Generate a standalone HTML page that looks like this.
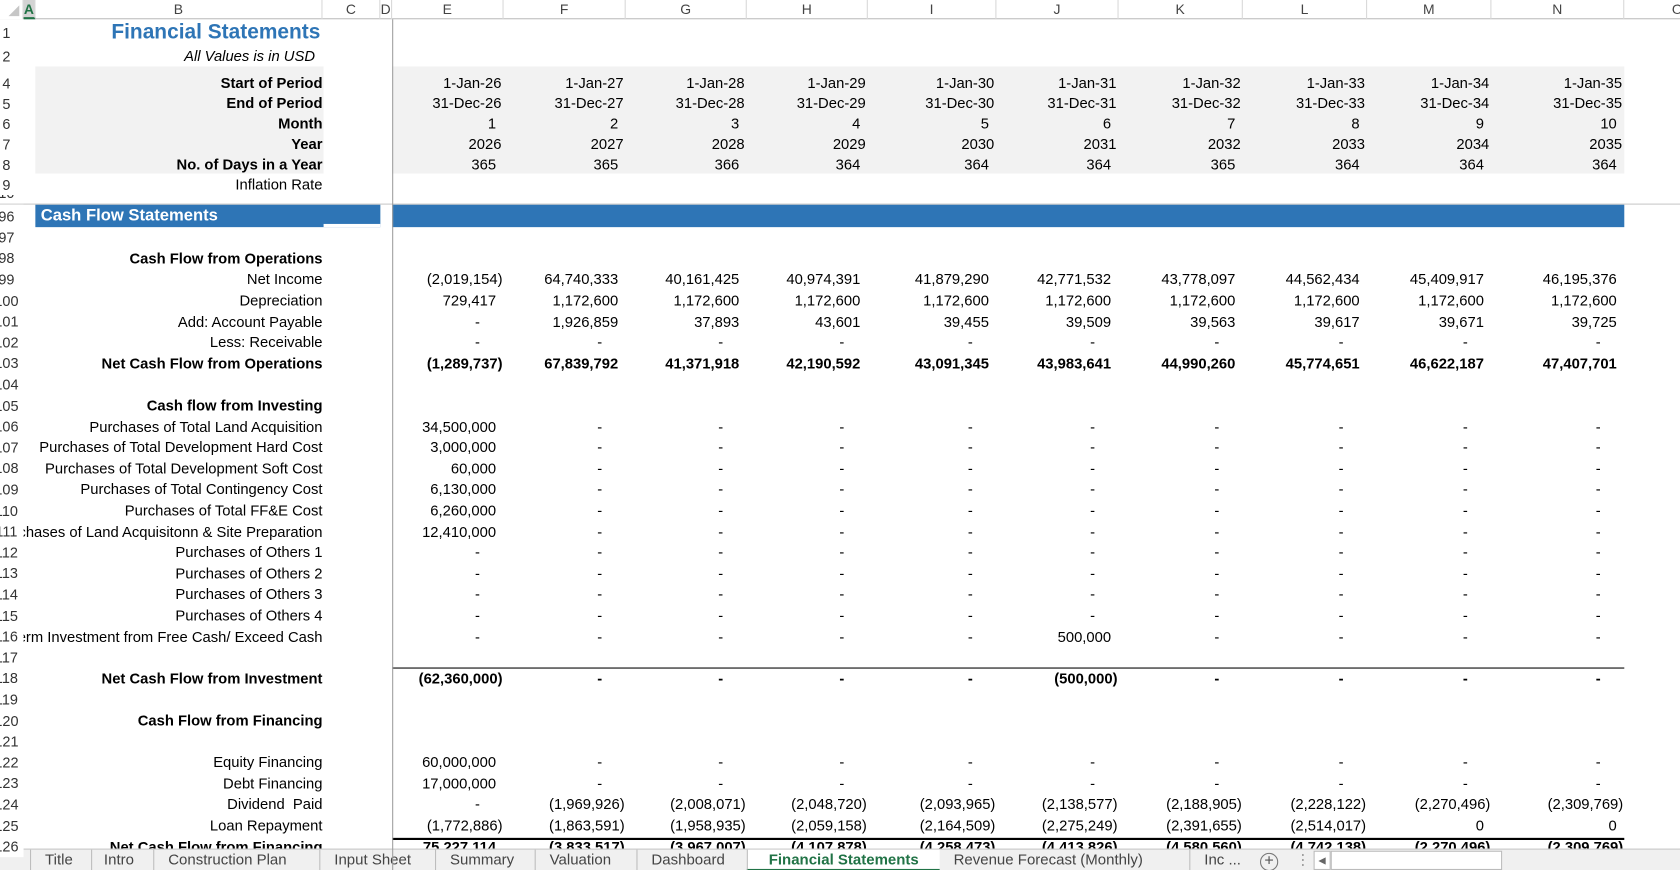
<!DOCTYPE html>
<html><head><meta charset="utf-8"><style>
*{margin:0;padding:0;box-sizing:border-box}
html,body{width:1680px;height:870px;overflow:hidden;background:#fff}
#w{position:absolute;left:0;top:0;width:1568px;height:812px;transform:scale(1.07143);transform-origin:0 0;font-family:"Liberation Sans",Arial,sans-serif;font-size:13.8px;color:#000;overflow:hidden}
.r{position:absolute;left:0;width:1568px;height:19.6px;display:flex;align-items:center;white-space:nowrap}
.n{position:absolute;left:0;top:0;width:22px;height:100%;background:#fff;z-index:2;overflow:hidden;color:#333;font-size:13.5px;font-weight:normal}
.n span{position:absolute;left:6px;top:50%;transform:translate(-50%,-50%);white-space:nowrap}
.l{margin-left:33px;width:268px;flex:none;display:flex;justify-content:flex-end;overflow:visible}
.v{flex:none;text-align:right;padding-right:7px}
.sp{width:65px;flex:none}
.v:nth-child(4){width:104px}.v:nth-child(5){width:114px}.v:nth-child(6){width:113px}.v:nth-child(7){width:113px}.v:nth-child(8){width:120px}.v:nth-child(9){width:114px}.v:nth-child(10){width:116px}.v:nth-child(11){width:116px}.v:nth-child(12){width:116px}.v:nth-child(13){width:124px}
.p{padding-right:1px}.d{padding-right:22px}.h{padding-right:2px}
.b{font-weight:bold}
.g{position:absolute;background:#f2f2f2}
#ch{position:absolute;left:0;top:0;width:1568px;height:18px;background:#fff;border-bottom:1px solid #bdbdbd;color:#444;font-size:13px}
#ch div{position:absolute;top:0;height:18px;line-height:18px;text-align:center;border-right:1px solid #d8d8d8}
#tabs{position:absolute;left:0;top:792px;width:1568px;height:20px;background:#f0f0f0;border-top:1px solid #c6c6c6;font-size:14px;color:#444}
#tabs span{position:absolute;top:0;height:20px;line-height:19px;border-left:1px solid #bdbdbd;padding:0 0}
</style></head><body><div id="w">
<div class="g" style="left:33px;top:62px;width:269px;height:100px"></div>
<div class="g" style="left:366px;top:62px;width:1150px;height:100px"></div>
<div style="position:absolute;left:33px;top:191px;width:322px;height:21px;background:#2e75b6"></div>
<div style="position:absolute;left:302px;top:209px;width:53px;height:3px;background:#fff"></div>
<div style="position:absolute;left:366px;top:191px;width:1150px;height:21px;background:#2e75b6"></div>
<div style="position:absolute;left:38px;top:191px;height:21px;line-height:21px;color:#fff;font-weight:bold;font-size:15.5px;z-index:3">Cash Flow Statements</div>
<div style="position:absolute;left:366px;top:18px;width:1px;height:800px;background:#9e9e9e;z-index:3"></div>
<div style="position:absolute;left:366px;top:623px;width:1150px;height:1px;background:#000"></div>
<div style="position:absolute;left:366px;top:782px;width:1150px;height:2px;background:#000"></div>

<div id="ch">
<div style="left:0;width:22px;background:#fff"><span style="position:absolute;left:8px;top:5px;width:0;height:0;border-left:10px solid transparent;border-bottom:10px solid #c6c6c6"></span></div>
<div style="left:22px;width:11px;background:#d3d3d3;color:#217346;font-weight:bold;border-bottom:2px solid #217346">A</div>
<div style="left:33px;width:268px">B</div>
<div style="left:301px;width:54px">C</div>
<div style="left:355px;width:11px">D</div>
<div style="left:366px;width:104px">E</div>
<div style="left:470px;width:114px">F</div>
<div style="left:584px;width:113px">G</div>
<div style="left:697px;width:113px">H</div>
<div style="left:810px;width:120px">I</div>
<div style="left:930px;width:114px">J</div>
<div style="left:1044px;width:116px">K</div>
<div style="left:1160px;width:116px">L</div>
<div style="left:1276px;width:116px">M</div>
<div style="left:1392px;width:124px">N</div>
<div style="left:1516px;width:100px">O</div>
</div>

<div class="r" style="top:18px;height:25px"><div class="n"><span>1</span></div><div class="l" style="color:#2e75b6;font-weight:bold;font-size:19.5px;padding-right:2px">Financial Statements</div></div>
<div class="r" style="top:43px"><div class="n"><span>2</span></div><div class="l" style="font-style:italic;padding-right:7px">All Values is in USD</div></div>
<div class="r" style="top:62px;height:6px"><div class="n"></div></div>
<div class="r" style="top:68px;height:19px"><div class="n"><span>4</span></div><div class="l b">Start of Period</div><div class="sp"></div><div class="v h">1-Jan-26</div><div class="v h">1-Jan-27</div><div class="v h">1-Jan-28</div><div class="v h">1-Jan-29</div><div class="v h">1-Jan-30</div><div class="v h">1-Jan-31</div><div class="v h">1-Jan-32</div><div class="v h">1-Jan-33</div><div class="v h">1-Jan-34</div><div class="v h">1-Jan-35</div></div>
<div class="r" style="top:87px;height:19px"><div class="n"><span>5</span></div><div class="l b">End of Period</div><div class="sp"></div><div class="v h">31-Dec-26</div><div class="v h">31-Dec-27</div><div class="v h">31-Dec-28</div><div class="v h">31-Dec-29</div><div class="v h">31-Dec-30</div><div class="v h">31-Dec-31</div><div class="v h">31-Dec-32</div><div class="v h">31-Dec-33</div><div class="v h">31-Dec-34</div><div class="v h">31-Dec-35</div></div>
<div class="r" style="top:106px;height:19px"><div class="n"><span>6</span></div><div class="l b">Month</div><div class="sp"></div><div class="v">1</div><div class="v">2</div><div class="v">3</div><div class="v">4</div><div class="v">5</div><div class="v">6</div><div class="v">7</div><div class="v">8</div><div class="v">9</div><div class="v">10</div></div>
<div class="r" style="top:125px;height:19px"><div class="n"><span>7</span></div><div class="l b">Year</div><div class="sp"></div><div class="v h">2026</div><div class="v h">2027</div><div class="v h">2028</div><div class="v h">2029</div><div class="v h">2030</div><div class="v h">2031</div><div class="v h">2032</div><div class="v h">2033</div><div class="v h">2034</div><div class="v h">2035</div></div>
<div class="r" style="top:144px;height:19px"><div class="n"><span>8</span></div><div class="l b">No. of Days in a Year</div><div class="sp"></div><div class="v">365</div><div class="v">365</div><div class="v">366</div><div class="v">364</div><div class="v">364</div><div class="v">364</div><div class="v">365</div><div class="v">364</div><div class="v">364</div><div class="v">364</div></div>
<div class="r" style="top:163px;height:19px"><div class="n"><span>9</span></div><div class="l">Inflation Rate</div></div>
<div class="r" style="top:182px;height:9px;border-bottom:1px solid #c8c8c8"><div class="n"><span style="top:0;transform:translate(-50%,-60%)">10</span></div></div>
<div class="r" style="top:191px;height:21px"><div class="n"><span>96</span></div></div>
<div class="r" style="top:212px"><div class="n"><span>97</span></div></div>
<div class="r" style="top:231.6px"><div class="n"><span>98</span></div><div class="l b">Cash Flow from Operations</div></div>
<div class="r" style="top:251.2px"><div class="n"><span>99</span></div><div class="l">Net Income</div><div class="sp"></div><div class="v p">(2,019,154)</div><div class="v">64,740,333</div><div class="v">40,161,425</div><div class="v">40,974,391</div><div class="v">41,879,290</div><div class="v">42,771,532</div><div class="v">43,778,097</div><div class="v">44,562,434</div><div class="v">45,409,917</div><div class="v">46,195,376</div></div>
<div class="r" style="top:270.8px"><div class="n"><span>100</span></div><div class="l">Depreciation</div><div class="sp"></div><div class="v">729,417</div><div class="v">1,172,600</div><div class="v">1,172,600</div><div class="v">1,172,600</div><div class="v">1,172,600</div><div class="v">1,172,600</div><div class="v">1,172,600</div><div class="v">1,172,600</div><div class="v">1,172,600</div><div class="v">1,172,600</div></div>
<div class="r" style="top:290.4px"><div class="n"><span>101</span></div><div class="l">Add: Account Payable</div><div class="sp"></div><div class="v d">-</div><div class="v">1,926,859</div><div class="v">37,893</div><div class="v">43,601</div><div class="v">39,455</div><div class="v">39,509</div><div class="v">39,563</div><div class="v">39,617</div><div class="v">39,671</div><div class="v">39,725</div></div>
<div class="r" style="top:310px"><div class="n"><span>102</span></div><div class="l">Less: Receivable</div><div class="sp"></div><div class="v d">-</div><div class="v d">-</div><div class="v d">-</div><div class="v d">-</div><div class="v d">-</div><div class="v d">-</div><div class="v d">-</div><div class="v d">-</div><div class="v d">-</div><div class="v d">-</div></div>
<div class="r b" style="top:329.6px"><div class="n"><span>103</span></div><div class="l">Net Cash Flow from Operations</div><div class="sp"></div><div class="v p">(1,289,737)</div><div class="v">67,839,792</div><div class="v">41,371,918</div><div class="v">42,190,592</div><div class="v">43,091,345</div><div class="v">43,983,641</div><div class="v">44,990,260</div><div class="v">45,774,651</div><div class="v">46,622,187</div><div class="v">47,407,701</div></div>
<div class="r" style="top:349.2px"><div class="n"><span>104</span></div></div>
<div class="r" style="top:368.8px"><div class="n"><span>105</span></div><div class="l b">Cash flow from Investing</div></div>
<div class="r" style="top:388.4px"><div class="n"><span>106</span></div><div class="l">Purchases of Total Land Acquisition</div><div class="sp"></div><div class="v">34,500,000</div><div class="v d">-</div><div class="v d">-</div><div class="v d">-</div><div class="v d">-</div><div class="v d">-</div><div class="v d">-</div><div class="v d">-</div><div class="v d">-</div><div class="v d">-</div></div>
<div class="r" style="top:408px"><div class="n"><span>107</span></div><div class="l">Purchases of Total Development Hard Cost</div><div class="sp"></div><div class="v">3,000,000</div><div class="v d">-</div><div class="v d">-</div><div class="v d">-</div><div class="v d">-</div><div class="v d">-</div><div class="v d">-</div><div class="v d">-</div><div class="v d">-</div><div class="v d">-</div></div>
<div class="r" style="top:427.6px"><div class="n"><span>108</span></div><div class="l">Purchases of Total Development Soft Cost</div><div class="sp"></div><div class="v">60,000</div><div class="v d">-</div><div class="v d">-</div><div class="v d">-</div><div class="v d">-</div><div class="v d">-</div><div class="v d">-</div><div class="v d">-</div><div class="v d">-</div><div class="v d">-</div></div>
<div class="r" style="top:447.2px"><div class="n"><span>109</span></div><div class="l">Purchases of Total Contingency Cost</div><div class="sp"></div><div class="v">6,130,000</div><div class="v d">-</div><div class="v d">-</div><div class="v d">-</div><div class="v d">-</div><div class="v d">-</div><div class="v d">-</div><div class="v d">-</div><div class="v d">-</div><div class="v d">-</div></div>
<div class="r" style="top:466.8px"><div class="n"><span>110</span></div><div class="l">Purchases of Total FF&amp;E Cost</div><div class="sp"></div><div class="v">6,260,000</div><div class="v d">-</div><div class="v d">-</div><div class="v d">-</div><div class="v d">-</div><div class="v d">-</div><div class="v d">-</div><div class="v d">-</div><div class="v d">-</div><div class="v d">-</div></div>
<div class="r" style="top:486.4px"><div class="n"><span>111</span></div><div class="l">Purchases of Land Acquisitonn &amp; Site Preparation</div><div class="sp"></div><div class="v">12,410,000</div><div class="v d">-</div><div class="v d">-</div><div class="v d">-</div><div class="v d">-</div><div class="v d">-</div><div class="v d">-</div><div class="v d">-</div><div class="v d">-</div><div class="v d">-</div></div>
<div class="r" style="top:506px"><div class="n"><span>112</span></div><div class="l">Purchases of Others 1</div><div class="sp"></div><div class="v d">-</div><div class="v d">-</div><div class="v d">-</div><div class="v d">-</div><div class="v d">-</div><div class="v d">-</div><div class="v d">-</div><div class="v d">-</div><div class="v d">-</div><div class="v d">-</div></div>
<div class="r" style="top:525.6px"><div class="n"><span>113</span></div><div class="l">Purchases of Others 2</div><div class="sp"></div><div class="v d">-</div><div class="v d">-</div><div class="v d">-</div><div class="v d">-</div><div class="v d">-</div><div class="v d">-</div><div class="v d">-</div><div class="v d">-</div><div class="v d">-</div><div class="v d">-</div></div>
<div class="r" style="top:545.2px"><div class="n"><span>114</span></div><div class="l">Purchases of Others 3</div><div class="sp"></div><div class="v d">-</div><div class="v d">-</div><div class="v d">-</div><div class="v d">-</div><div class="v d">-</div><div class="v d">-</div><div class="v d">-</div><div class="v d">-</div><div class="v d">-</div><div class="v d">-</div></div>
<div class="r" style="top:564.8px"><div class="n"><span>115</span></div><div class="l">Purchases of Others 4</div><div class="sp"></div><div class="v d">-</div><div class="v d">-</div><div class="v d">-</div><div class="v d">-</div><div class="v d">-</div><div class="v d">-</div><div class="v d">-</div><div class="v d">-</div><div class="v d">-</div><div class="v d">-</div></div>
<div class="r" style="top:584.4px"><div class="n"><span>116</span></div><div class="l">Short Term Investment from Free Cash/ Exceed Cash</div><div class="sp"></div><div class="v d">-</div><div class="v d">-</div><div class="v d">-</div><div class="v d">-</div><div class="v d">-</div><div class="v">500,000</div><div class="v d">-</div><div class="v d">-</div><div class="v d">-</div><div class="v d">-</div></div>
<div class="r" style="top:604px"><div class="n"><span>117</span></div></div>
<div class="r b" style="top:623.6px"><div class="n"><span>118</span></div><div class="l">Net Cash Flow from Investment</div><div class="sp"></div><div class="v p">(62,360,000)</div><div class="v d">-</div><div class="v d">-</div><div class="v d">-</div><div class="v d">-</div><div class="v p">(500,000)</div><div class="v d">-</div><div class="v d">-</div><div class="v d">-</div><div class="v d">-</div></div>
<div class="r" style="top:643.2px"><div class="n"><span>119</span></div></div>
<div class="r" style="top:662.8px"><div class="n"><span>120</span></div><div class="l b">Cash Flow from Financing</div></div>
<div class="r" style="top:682.4px"><div class="n"><span>121</span></div></div>
<div class="r" style="top:702px"><div class="n"><span>122</span></div><div class="l">Equity Financing</div><div class="sp"></div><div class="v">60,000,000</div><div class="v d">-</div><div class="v d">-</div><div class="v d">-</div><div class="v d">-</div><div class="v d">-</div><div class="v d">-</div><div class="v d">-</div><div class="v d">-</div><div class="v d">-</div></div>
<div class="r" style="top:721.6px"><div class="n"><span>123</span></div><div class="l">Debt Financing</div><div class="sp"></div><div class="v">17,000,000</div><div class="v d">-</div><div class="v d">-</div><div class="v d">-</div><div class="v d">-</div><div class="v d">-</div><div class="v d">-</div><div class="v d">-</div><div class="v d">-</div><div class="v d">-</div></div>
<div class="r" style="top:741.2px"><div class="n"><span>124</span></div><div class="l">Dividend&nbsp; Paid</div><div class="sp"></div><div class="v d">-</div><div class="v p">(1,969,926)</div><div class="v p">(2,008,071)</div><div class="v p">(2,048,720)</div><div class="v p">(2,093,965)</div><div class="v p">(2,138,577)</div><div class="v p">(2,188,905)</div><div class="v p">(2,228,122)</div><div class="v p">(2,270,496)</div><div class="v p">(2,309,769)</div></div>
<div class="r" style="top:760.8px"><div class="n"><span>125</span></div><div class="l">Loan Repayment</div><div class="sp"></div><div class="v p">(1,772,886)</div><div class="v p">(1,863,591)</div><div class="v p">(1,958,935)</div><div class="v p">(2,059,158)</div><div class="v p">(2,164,509)</div><div class="v p">(2,275,249)</div><div class="v p">(2,391,655)</div><div class="v p">(2,514,017)</div><div class="v">0</div><div class="v">0</div></div>
<div class="r b" style="top:780.4px"><div class="n"><span>126</span></div><div class="l">Net Cash Flow from Financing</div><div class="sp"></div><div class="v">75,227,114</div><div class="v p">(3,833,517)</div><div class="v p">(3,967,007)</div><div class="v p">(4,107,878)</div><div class="v p">(4,258,473)</div><div class="v p">(4,413,826)</div><div class="v p">(4,580,560)</div><div class="v p">(4,742,138)</div><div class="v p">(2,270,496)</div><div class="v p">(2,309,769)</div></div>

<div id="tabs">
<span style="left:0;width:28px;border-left:none"></span>
<span style="left:28px;padding:0 13px">Title</span>
<span style="left:85px;padding:0 11px">Intro</span>
<span style="left:143px;padding:0 13px">Construction Plan</span>
<span style="left:298px;padding:0 13px">Input Sheet</span>
<span style="left:406px;padding:0 13px">Summary</span>
<span style="left:499px;padding:0 13px">Valuation</span>
<span style="left:594px;padding:0 13px">Dashboard</span>
<span style="left:697px;width:180px;text-align:center;background:#fff;color:#217346;font-weight:bold;border-bottom:2px solid #217346">Financial Statements</span>
<span style="left:877px;padding:0 13px;border-left:none">Revenue Forecast (Monthly)</span>
<span style="left:1110px;padding:0 13px">Inc ...</span>
<span style="left:1176px;top:3px;width:17px;height:17px;line-height:14px;border:1px solid #777;border-radius:50%;text-align:center;font-size:15px;color:#555">+</span>
<span style="left:1209px;border:none;color:#999">⋮</span>
<span style="left:1226px;top:1px;width:16px;height:18px;border:1px solid #bbb;background:#fff;font-size:9px;line-height:17px;text-align:center;color:#666">◀</span>
<span style="left:1242px;top:1px;width:160px;height:18px;border:1px solid #bbb;background:#fff"></span>
</div>
</div></body></html>
